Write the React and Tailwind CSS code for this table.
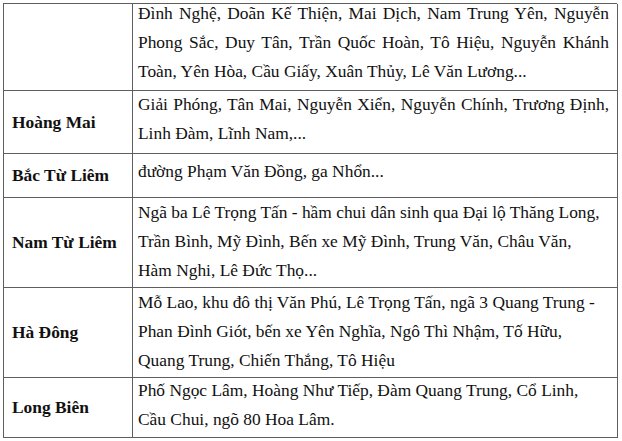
import React from 'react';

// each right-hand cell is split into its visual lines; "j" marks a justified line
const ROWS = [
    {
        label: '',
        height: 'h-[87px]',
        offset: '-mt-[5px]',
        lines: [
            { text: 'Đình Nghệ, Doãn Kế Thiện, Mai Dịch, Nam Trung Yên, Nguyễn', j: true },
            { text: 'Phong Sắc, Duy Tân, Trần Quốc Hoàn, Tô Hiệu, Nguyễn Khánh', j: true },
            { text: 'Toàn, Yên Hòa, Cầu Giấy, Xuân Thủy, Lê Văn Lương...' }
        ]
    },
    {
        label: 'Hoàng Mai',
        height: 'h-[63px]',
        offset: '-mt-[1px]',
        lines: [
            { text: 'Giải Phóng, Tân Mai, Nguyễn Xiển, Nguyễn Chính, Trương Định,', j: true },
            { text: 'Linh Đàm, Lĩnh Nam,...' }
        ]
    },
    {
        label: 'Bắc Từ Liêm',
        height: 'h-[44px]',
        offset: 'mt-[3px]',
        lines: [{ text: 'đường Phạm Văn Đồng, ga Nhổn...' }]
    },
    {
        label: 'Nam Từ Liêm',
        height: 'h-[90px]',
        offset: 'mt-0',
        lines: [
            { text: 'Ngã ba Lê Trọng Tấn - hầm chui dân sinh qua Đại lộ Thăng Long,' },
            { text: 'Trần Bình, Mỹ Đình, Bến xe Mỹ Đình, Trung Văn, Châu Văn,' },
            { text: 'Hàm Nghi, Lê Đức Thọ...' }
        ]
    },
    {
        label: 'Hà Đông',
        height: 'h-[90px]',
        offset: 'mt-0',
        lines: [
            { text: 'Mỗ Lao, khu đô thị Văn Phú, Lê Trọng Tấn, ngã 3 Quang Trung -' },
            { text: 'Phan Đình Giót, bến xe Yên Nghĩa, Ngô Thì Nhậm, Tố Hữu,' },
            { text: 'Quang Trung, Chiến Thắng, Tô Hiệu' }
        ]
    },
    {
        label: 'Long Biên',
        height: 'h-[60px]',
        offset: '-mt-[2px]',
        lines: [
            { text: 'Phố Ngọc Lâm, Hoàng Như Tiếp, Đàm Quang Trung, Cổ Linh,' },
            { text: 'Cầu Chui, ngõ 80 Hoa Lâm.' }
        ]
    }
];

const cellBorder = 'border-r border-b border-[#5e5e5e]';

const App = () => {
    return (
        <div className="w-[622px] h-[441px] overflow-hidden bg-white font-['Liberation_Serif',serif] text-[17.4px] leading-[29px] text-[#111]">
            <div className="ml-[3px] mt-[3px] w-[614px] grid grid-cols-[129px_485px] border-l border-t border-[#5e5e5e]">
                {ROWS.map((row, i) => (
                    <React.Fragment key={i}>
                        <div className={`${cellBorder} ${row.height} flex items-center pl-2 font-bold`}>
                            {row.label}
                        </div>
                        <div className={`${cellBorder} ${row.height} pl-[5px] pr-[8px]`}>
                            <div className={row.offset}>
                                {row.lines.map((line) => (
                                    <div
                                        key={line.text}
                                        className={`whitespace-nowrap ${line.j ? 'text-justify [text-align-last:justify]' : ''}`}
                                    >
                                        {line.text}
                                    </div>
                                ))}
                            </div>
                        </div>
                    </React.Fragment>
                ))}
            </div>
        </div>
    );
};

export default App;
